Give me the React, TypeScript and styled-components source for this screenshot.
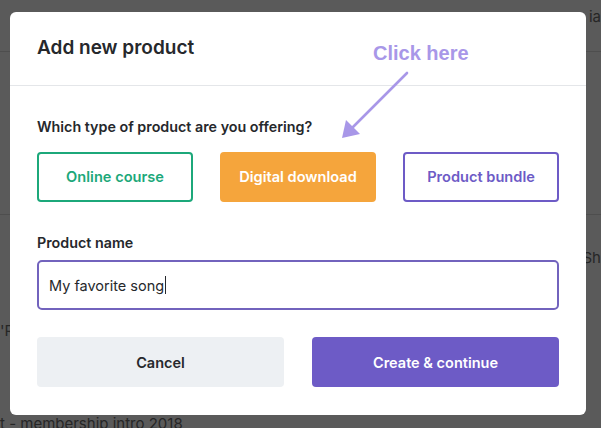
import React from 'react';
import styled, { createGlobalStyle } from 'styled-components';

const COLORS = {
  BACKDROP: '#5a5a5a',
  BACKDROP_LINE: '#4e4e4e',
  BACKDROP_TEXT: '#262626',
  TEXT: '#26282c',
  DIVIDER: '#e4e6e9',
  GREEN: '#1ca87a',
  ORANGE: '#f5a53c',
  PURPLE: '#6d5bc6',
  INPUT_BORDER: '#7263bd',
  CANCEL_BG: '#edf0f3',
  HINT: '#a897e8',
  WHITE: '#ffffff',
};

const GlobalStyle = createGlobalStyle`
  html, body {
    margin: 0;
    padding: 0;
    width: 601px;
    height: 428px;
    overflow: hidden;
    background: ${COLORS.BACKDROP};
    font-family: Inter, "Noto Sans", sans-serif;
  }
  * { box-sizing: border-box; }
`;

/* faint page behind the dialog */
const Page = styled.div`
  width: 601px;
  height: 428px;
  display: flex;
  flex-direction: column;
  color: ${COLORS.BACKDROP_TEXT};
  font-size: 15px;
`;

const PageRow = styled.div<{ height: number; line?: boolean }>`
  height: ${({ height }) => height}px;
  flex-shrink: 0;
  display: flex;
  justify-content: space-between;
  align-items: ${({ line }) => (line ? 'flex-start' : 'center')};
  border-bottom: ${({ line }) => (line ? `1px solid ${COLORS.BACKDROP_LINE}` : 'none')};
`;

const PageText = styled.span<{ offset?: number }>`
  padding: ${({ offset }) => offset ?? 0}px 0 0 0;
  white-space: nowrap;
  line-height: 18px;
`;

const Overlay = styled.div`
  position: fixed;
  inset: 0;
`;

const Modal = styled.div`
  position: absolute;
  left: 10px;
  top: 12px;
  width: 576px;
  height: 403px;
  background: ${COLORS.WHITE};
  border-radius: 6px;
  display: flex;
  flex-direction: column;
`;

const Header = styled.div`
  height: 74px;
  padding: 0 27px;
  display: flex;
  align-items: center;
  border-bottom: 1px solid ${COLORS.DIVIDER};
`;

const Title = styled.h2`
  margin: 0 0 2px;
  font-size: 19px;
  font-weight: 600;
  color: ${COLORS.TEXT};
`;

const Body = styled.div`
  padding: 31px 27px 28px;
  display: flex;
  flex-direction: column;
`;

const Label = styled.div<{ gap?: number }>`
  font-size: 14.3px;
  line-height: 20px;
  font-weight: 600;
  color: ${COLORS.TEXT};
  margin-top: ${({ gap }) => gap ?? 0}px;
`;

const Choices = styled.div`
  margin-top: 15px;
  display: grid;
  grid-template-columns: repeat(3, 1fr);
  column-gap: 27px;
`;

type Variant = 'green' | 'orange' | 'purple';

const Choice = styled.button<{ variant: Variant }>`
  height: 50px;
  border-radius: 4px;
  font-family: Inter, "Noto Sans", sans-serif;
  font-size: 14.6px;
  font-weight: 600;
  cursor: pointer;
  ${({ variant }) =>
    variant === 'orange'
      ? `
    background: ${COLORS.ORANGE};
    border: 2px solid ${COLORS.ORANGE};
    color: ${COLORS.WHITE};
  `
      : `
    background: ${COLORS.WHITE};
    border: 2px solid ${variant === 'green' ? COLORS.GREEN : COLORS.PURPLE};
    color: ${variant === 'green' ? COLORS.GREEN : COLORS.PURPLE};
  `}
`;

const Field = styled.div`
  margin-top: 7px;
  height: 50px;
  width: 522px;
  border: 2px solid ${COLORS.INPUT_BORDER};
  border-radius: 5px;
  padding: 0 10px;
  display: flex;
  align-items: center;
  font-size: 14.5px;
  color: ${COLORS.TEXT};
`;

const Caret = styled.span`
  display: inline-block;
  width: 1px;
  height: 18px;
  background: ${COLORS.TEXT};
  margin-left: 1px;
`;

const Footer = styled.div`
  margin-top: 27px;
  display: grid;
  grid-template-columns: 1fr 1fr;
  column-gap: 28px;
`;

const FooterButton = styled.button<{ primary?: boolean }>`
  height: 50px;
  border: none;
  border-radius: 4px;
  font-family: Inter, "Noto Sans", sans-serif;
  font-size: 14.5px;
  font-weight: 600;
  background: ${({ primary }) => (primary ? COLORS.PURPLE : COLORS.CANCEL_BG)};
  color: ${({ primary }) => (primary ? COLORS.WHITE : COLORS.TEXT)};
  cursor: pointer;
`;

const Hint = styled.div`
  position: absolute;
  left: 363px;
  top: 30px;
  font-family: "Liberation Sans", Arial, sans-serif;
  font-size: 20px;
  font-weight: 700;
  color: ${COLORS.HINT};
`;

const HintArrow = styled.svg`
  position: absolute;
  left: 326px;
  top: 56px;
`;

export default function App() {
  return (
    <>
      <GlobalStyle />
      <Page>
        <PageRow height={52} line>
          <span />
          <PageText offset={8}>ia</PageText>
        </PageRow>
        <PageRow height={163} line />
        <PageRow height={86}>
          <span />
          <PageText offset={0}>Sh</PageText>
        </PageRow>
        <PageRow height={60}>
          <PageText>'R</PageText>
        </PageRow>
        <PageRow height={64}>
          <PageText offset={62}>t - membership intro 2018</PageText>
        </PageRow>
      </Page>
      <Overlay>
        <Modal>
          <Header>
            <Title>Add new product</Title>
          </Header>
          <Body>
            <Label>Which type of product are you offering?</Label>
            <Choices>
              <Choice variant="green">Online course</Choice>
              <Choice variant="orange">Digital download</Choice>
              <Choice variant="purple">Product bundle</Choice>
            </Choices>
            <Label gap={31}>Product name</Label>
            <Field>
              My favorite song
              <Caret />
            </Field>
            <Footer>
              <FooterButton>Cancel</FooterButton>
              <FooterButton primary>Create &amp; continue</FooterButton>
            </Footer>
          </Body>
          <Hint>Click here</Hint>
          <HintArrow width="76" height="76" viewBox="0 0 76 76">
            <line x1="71" y1="5" x2="14" y2="62" stroke={COLORS.HINT} strokeWidth="2.6" strokeLinecap="round" />
            <polygon points="6,70 10,52 24,66" fill={COLORS.HINT} />
          </HintArrow>
        </Modal>
      </Overlay>
    </>
  );
}
